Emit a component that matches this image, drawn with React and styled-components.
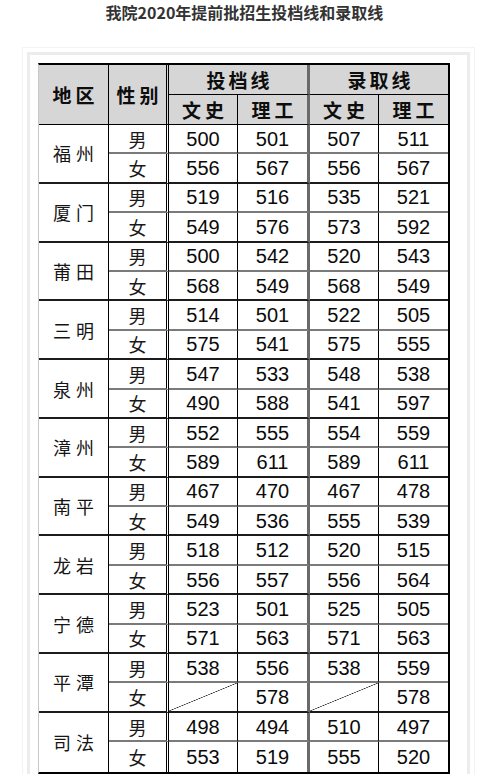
import React from "react";
import styled, { createGlobalStyle, css } from "styled-components";

const Global = createGlobalStyle`
  html, body { margin: 0; padding: 0; background: #fff; }
  body { font-family: "Noto Sans CJK SC", "Noto Sans", sans-serif; }
`;

const Page = styled.div`
  width: 500px;
  height: 774px;
  overflow: hidden;
`;

const Title = styled.h1`
  margin: 0;
  width: 445px;
  margin-left: 22px;
  height: 24px;
  line-height: 24px;
  text-align: center;
  font-size: 16px;
  font-weight: 700;
  color: #333;
  font-family: "Noto Sans CJK SC", "Noto Sans", sans-serif;
`;

const Frame = styled.div`
  margin: 23px 0 0 22px;
  width: 443px;
  border: 1px solid #f3f3f3;
  padding: 4px 4px 0 4px;
`;

const Panel = styled.div`
  border: 3px solid #ececec;
  border-bottom: none;
  padding: 8px 9px 40px 8px;
  background: #fff;
`;

const Grid = styled.div`
  display: grid;
  width: 412px;
  box-sizing: border-box;
  grid-template-columns: 70px 60px 69px 72px 69px 69px;
  grid-template-rows: 30px 30px repeat(22, 29.4px);
  border-top: 2px solid #000;
  border-right: 2px solid #000;
  border-bottom: 2px solid #000;
  border-left: 1px solid #c8c8c8;
`;

const rightBorders = {
  thin: "1px solid #000",
  double: "3px double #000",
  gray: "3px solid #6a6a6a",
  none: "none",
};

const bottomBorders = {
  head: "1px solid #000",
  inner: "2px solid #7a7a7a",
  group: "2px solid #1c1c1c",
  none: "none",
};

const Cell = styled.div`
  box-sizing: border-box;
  display: flex;
  align-items: center;
  justify-content: center;
  color: #111;
  background: ${(p) => (p.$head ? "#d6d6d6" : "#fff")};
  border-right: ${(p) => rightBorders[p.$br || "none"]};
  border-bottom: ${(p) => bottomBorders[p.$bb || "none"]};
  grid-row: ${(p) => (p.$rows ? `span ${p.$rows}` : "auto")};
  grid-column: ${(p) => (p.$cols ? `span ${p.$cols}` : "auto")};
  overflow: hidden;
  white-space: nowrap;
  ${(p) =>
    p.$kind === "head" &&
    css`
      font-size: 19px;
      font-weight: 700;
      letter-spacing: ${p.$wide ? "3px" : "4px"};
      text-indent: ${p.$wide ? "3px" : "4px"};
      color: #0d0d0d;
    `}
  ${(p) =>
    p.$kind === "region" &&
    css`
      font-size: 18px;
      font-weight: 400;
      letter-spacing: 5px;
      text-indent: 5px;
      color: #151515;
    `}
  ${(p) =>
    p.$kind === "gender" &&
    css`
      font-size: 18px;
      font-weight: 400;
      color: #1a1a1a;
    `}
  ${(p) =>
    p.$kind === "num" &&
    css`
      font-family: "Liberation Sans", Arial, sans-serif;
      font-size: 20px;
      color: #0a0a0a;
      padding-top: 1px;
    `}
  ${(p) =>
    p.$diag &&
    css`
      background: linear-gradient(
        to bottom right,
        transparent calc(50% - 0.6px),
        #222 50%,
        transparent calc(50% + 0.6px)
      );
    `}
`;

const data = [
  ["福州", [500, 501, 507, 511], [556, 567, 556, 567]],
  ["厦门", [519, 516, 535, 521], [549, 576, 573, 592]],
  ["莆田", [500, 542, 520, 543], [568, 549, 568, 549]],
  ["三明", [514, 501, 522, 505], [575, 541, 575, 555]],
  ["泉州", [547, 533, 548, 538], [490, 588, 541, 597]],
  ["漳州", [552, 555, 554, 559], [589, 611, 589, 611]],
  ["南平", [467, 470, 467, 478], [549, 536, 555, 539]],
  ["龙岩", [518, 512, 520, 515], [556, 557, 556, 564]],
  ["宁德", [523, 501, 525, 505], [571, 563, 571, 563]],
  ["平潭", [538, 556, 538, 559], [null, 578, null, 578]],
  ["司法", [498, 494, 510, 497], [553, 519, 555, 520]],
];

const numRight = ["thin", "gray", "thin", "none"];

function Row({ gender, values, bb }) {
  return (
    <>
      <Cell $kind="gender" $br="double" $bb={bb}>
        {gender}
      </Cell>
      {values.map((v, i) => (
        <Cell
          key={i}
          $kind="num"
          $br={numRight[i]}
          $bb={bb}
          $diag={v === null}
        >
          {v === null ? "" : v}
        </Cell>
      ))}
    </>
  );
}

export default function App() {
  return (
    <Page>
      <Global />
      <Title>我院2020年提前批招生投档线和录取线</Title>
      <Frame>
        <Panel>
          <Grid>
            <Cell $head $kind="head" $rows={2} $br="thin" $bb="head">
              地区
            </Cell>
            <Cell $head $kind="head" $rows={2} $br="double" $bb="head">
              性别
            </Cell>
            <Cell $head $kind="head" $wide $cols={2} $br="gray" $bb="head">
              投档线
            </Cell>
            <Cell $head $kind="head" $wide $cols={2} $br="none" $bb="head">
              录取线
            </Cell>
            <Cell $head $kind="head" $br="thin" $bb="head">
              文史
            </Cell>
            <Cell $head $kind="head" $br="gray" $bb="head">
              理工
            </Cell>
            <Cell $head $kind="head" $br="thin" $bb="head">
              文史
            </Cell>
            <Cell $head $kind="head" $br="none" $bb="head">
              理工
            </Cell>
            {data.map(([region, male, female], gi) => {
              const last = gi === data.length - 1;
              return (
                <React.Fragment key={region}>
                  <Cell
                    $kind="region"
                    $rows={2}
                    $br="thin"
                    $bb={last ? "none" : "group"}
                  >
                    {region}
                  </Cell>
                  <Row gender="男" values={male} bb="inner" />
                  <Row gender="女" values={female} bb={last ? "none" : "group"} />
                </React.Fragment>
              );
            })}
          </Grid>
        </Panel>
      </Frame>
    </Page>
  );
}
